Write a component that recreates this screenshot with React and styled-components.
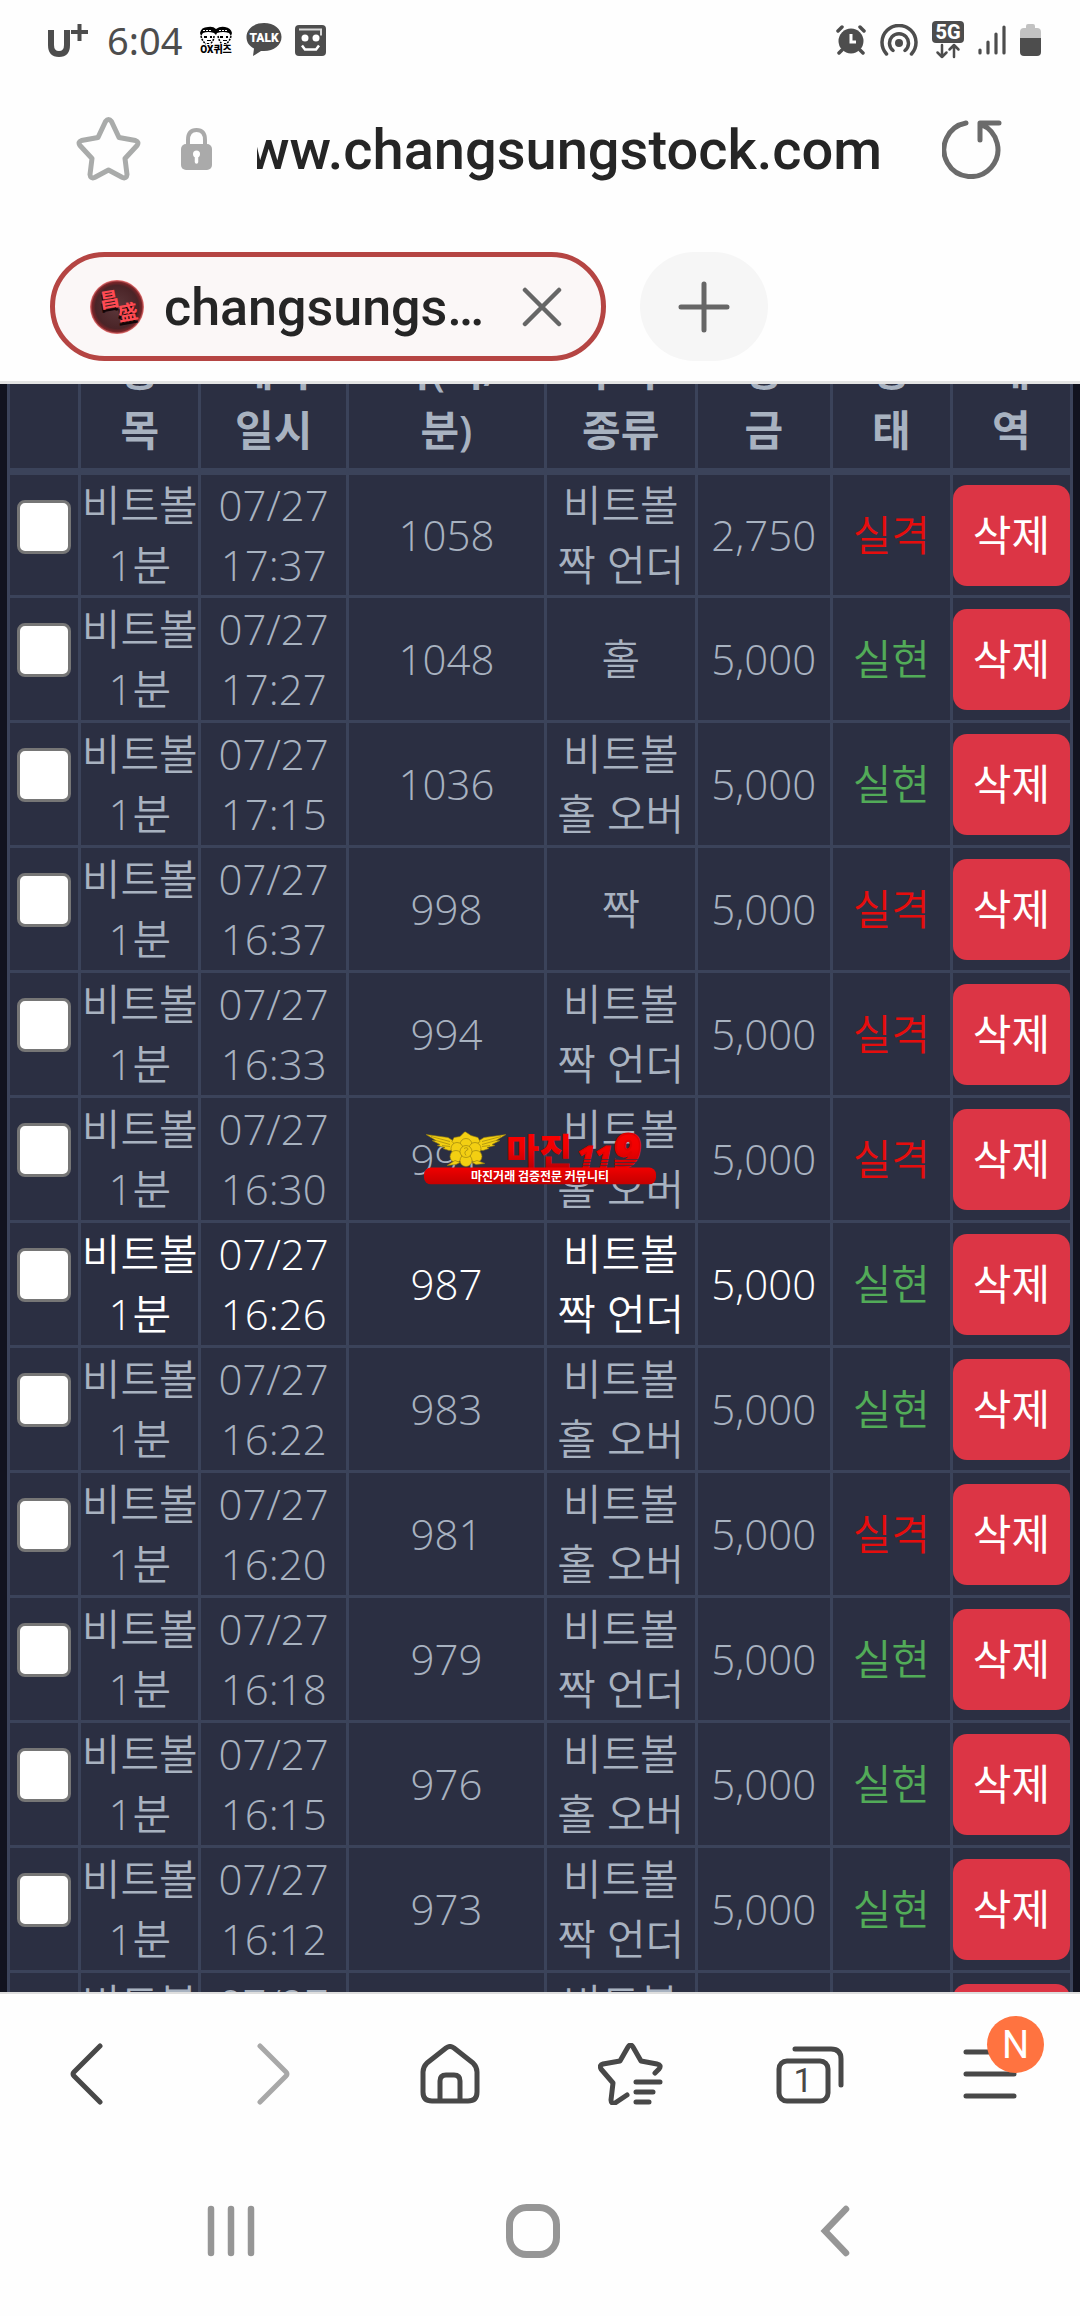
import React from 'react';
import styled, { createGlobalStyle } from 'styled-components';

const ui = `Roboto, "Noto Sans CJK KR", sans-serif`;
const body = `"Open Sans", "Noto Sans CJK KR", sans-serif`;

const GlobalStyle = createGlobalStyle`
  * { box-sizing: border-box; }
  body { margin: 0; background: #fefefe; font-family: ${ui}; }
  button { margin: 0; padding: 0; border: 0; background: none; font: inherit; color: inherit; display: flex; align-items: center; justify-content: center; }
  svg { display: block; }
`;

const Phone = styled.div`
  position: relative;
  display: flex;
  flex-direction: column;
  height: 100vh;
  overflow: hidden;
`;

const StatusBar = styled.header`
  display: flex;
  justify-content: space-between;
  align-items: center;
  height: 80px;
  padding: 0 39px 0 48px;
  color: #4d4d4d;
`;

const StatusGroup = styled.div`
  display: flex;
  align-items: center;
  gap: ${(p) => p.$gap}px;
`;

const Clock = styled.time`
  margin: 0 4px 0 6px;
  font-family: "Noto Sans", sans-serif;
  font-size: 38px;
  line-height: 48px;
`;

const AddressBar = styled.div`
  display: flex;
  align-items: center;
  height: 140px;
  padding: 0 78px 2px 76px;
`;

const LockSlot = styled.span`
  margin-left: 40px;
`;

const Url = styled.div`
  flex: 1;
  display: flex;
  justify-content: flex-end;
  overflow: hidden;
  margin: 0 60px 0 45px;
  padding-top: 2px;
  font-size: 56px;
  font-weight: 500;
  line-height: 72px;
  color: #252525;
  white-space: nowrap;
`;

const TabStrip = styled.div`
  display: flex;
  gap: 34px;
  height: 164px;
  padding: 32px 50px 20px;
  border-bottom: 3px solid #e3e3e3;
`;

const Tab = styled.div`
  display: flex;
  align-items: center;
  width: 556px;
  height: 109px;
  padding: 0 39px 0 35px;
  border: 5px solid #b54543;
  border-radius: 55px;
  background: #fbf7f7;
`;

const TabTitle = styled.span`
  flex: 1;
  margin-left: 20px;
  padding-top: 2px;
  font-size: 52px;
  font-weight: 500;
  line-height: 64px;
  color: #252525;
`;

const NewTab = styled.button`
  && { width: 128px; height: 109px; border-radius: 55px; background: #f6f6f6; }
`;

const Content = styled.main`
  flex: 1;
  min-height: 0;
  display: flex;
  align-items: flex-start;
  overflow: hidden;
  padding: 0 7px;
  background: #11131f;
`;

const Table = styled.table`
  width: 100%;
  margin-top: -47px;
  table-layout: fixed;
  border-collapse: collapse;
  background: #2b2f42;
  color: #a8b2c0;
  font-family: ${body};
  font-size: 42px;
  font-weight: 350;
  line-height: 60px;
  text-align: center;
  white-space: pre-line;
`;

const Col = styled.col`
  width: ${(p) => p.$w}%;
`;

const HeadCell = styled.th`
  padding: 0 0 8px;
  border: 3px solid #3b435a;
  border-bottom-width: 7px;
  font-weight: 600;
  vertical-align: bottom;
`;

const Row = styled.tr`
  color: ${(p) => (p.$active ? '#ffffff' : 'inherit')};
`;

const Cell = styled.td`
  height: 125px;
  padding: 0;
  border: 3px solid #3b435a;
  vertical-align: middle;
`;

const CheckCell = styled(Cell)`
  vertical-align: top;
  padding-top: 25px;
`;

const Check = styled.input`
  display: block;
  appearance: none;
  width: 54px;
  height: 54px;
  margin: 0 auto;
  border: 3px solid #767676;
  border-radius: 8px;
  background: #ffffff;
`;

const StatusCell = styled(Cell)`
  color: ${(p) => (p.$won ? '#52ab58' : '#e60d0d')};
`;

const DeleteButton = styled.button`
  && {
    width: 100%;
    height: 101px;
    border-radius: 14px;
    background: #dc3545;
    color: #ffffff;
    font-weight: 400;
  }
`;

const Watermark = styled.div`
  position: absolute;
  left: 50%;
  top: 50%;
  transform: translate(-50%, -50%);
`;

const Toolbar = styled.nav`
  display: grid;
  grid-template-columns: repeat(6, 1fr);
  align-items: center;
  height: 162px;
  border-top: 2px solid #dedede;
`;

const ToolButton = styled.button`
  && { position: relative; height: 100px; color: ${(p) => (p.$dim ? '#a8a8a8' : '#484848')}; }
`;

const Badge = styled.span`
  position: absolute;
  top: -8px;
  left: 87px;
  width: 57px;
  height: 57px;
  border-radius: 50%;
  background: #ff7340;
  color: #ffffff;
  font-size: 38px;
  line-height: 58px;
  text-align: center;
`;

const SystemNav = styled.nav`
  display: grid;
  grid-template-columns: repeat(3, 302px);
  justify-content: center;
  align-items: center;
  height: 162px;
  padding: 0 14px 8px 0;
  color: #969696;
`;

const stroke = (w) => ({
  fill: 'none',
  stroke: 'currentColor',
  strokeWidth: w,
  strokeLinecap: 'round',
  strokeLinejoin: 'round',
});

const Carrier = () => (
  <svg width="40" height="34" viewBox="0 0 40 34" role="img" aria-label="U+">
    <path d="M3 7v15q0 9 8 9t8-9V7" fill="none" stroke="currentColor" strokeWidth="6" />
    <path d="M23 9h17M31.500 1v17" stroke="currentColor" strokeWidth="4" />
  </svg>
);

const QuizIcon = () => (
  <svg width="34" height="28" viewBox="0 0 34 28" fill="#000">
    <path d="M1 7Q2 1 9 1q5-1 8 2 4-3 9-2 6 1 7 6l-1 3-2-3q-6-2-12 0l-1 2-2-2Q9 5 4 7l-2 3z" />
    <path d="M4 4.500h9M20 4.500h9" stroke="#fff" strokeWidth="1" strokeDasharray="2 1" />
    <path d="M2 10q1 5 5 8M15 10q0 5-4 8M19 10q1 5 4 8M32 10q-1 5-5 8" fill="none" stroke="#000" strokeWidth="1.500" strokeDasharray="2 1" />
    <path d="M5 10h3v2H5zM11 10h2v2h-2zM8 14h4v1H8zM21 10h3v2h-3zM27 10h2v2h-2zM24 14h4v1h-4zM8 17h2v1H8zM25 17h2v1h-2z" />
    <text x="17" y="27" textAnchor="middle" fontSize="10" fontWeight="900" fontFamily='Roboto, "Noto Sans CJK KR", sans-serif'>OX퀴즈</text>
  </svg>
);

const TalkIcon = () => (
  <svg width="36" height="34" viewBox="0 0 36 34">
    <path d="M18 0c10 0 17.500 6 17.500 14S28 28 18 28h-3l-8 5 1-7.500C3 23 .5 19 .5 14 .5 6 8 0 18 0z" fill="currentColor" />
    <text x="18" y="19" textAnchor="middle" fontSize="12" fontWeight="900" fontFamily="Roboto, sans-serif" fill="#fff">TALK</text>
  </svg>
);

const FaceIcon = () => (
  <svg width="31" height="31" viewBox="0 0 31 31">
    <rect width="31" height="31" rx="4" fill="currentColor" />
    <path d="M4 4.500h22v6" fill="none" stroke="#d8d8d8" strokeWidth="2" />
    <circle cx="10" cy="13" r="3.500" fill="#fff" />
    <circle cx="21" cy="13" r="3.500" fill="#fff" />
    <path d="M7 20.500l3 4h11l3-4" fill="none" stroke="#fff" strokeWidth="2.500" />
  </svg>
);

const AlarmIcon = () => (
  <svg width="30" height="30" viewBox="0 0 30 30">
    <circle cx="15" cy="16" r="12.500" fill="currentColor" />
    <path d="M2 6l4-4M28 6l-4-4M6 25l-3 3M24 25l3 3" {...stroke(3.5)} />
    <path d="M15 9v8h5" fill="none" stroke="#fff" strokeWidth="3" />
  </svg>
);

const HotspotIcon = () => (
  <svg width="38" height="32" viewBox="0 0 38 32">
    <circle cx="19" cy="19" r="4" fill="currentColor" />
    <path d="M13 26.500a9.500 9.500 0 1 1 12 0M6.500 30a17 17 0 1 1 25 0" {...stroke(3.5)} />
  </svg>
);

const NetworkIcon = () => (
  <svg width="32" height="38" viewBox="0 0 32 38">
    <rect width="32" height="22" rx="4" fill="currentColor" />
    <text x="16" y="18" textAnchor="middle" fontSize="20" fontWeight="800" fontFamily="Roboto, sans-serif" fill="#fff">5G</text>
    <path d="M10 24v12M5.500 31.500l4.500 4.500 4.500-4.500M22 36V24M17.500 28.500L22 24l4.500 4.500" {...stroke(2.5)} />
  </svg>
);

const SignalIcon = () => (
  <svg width="28" height="30" viewBox="0 0 28 30">
    <path d="M2 25v3M10 17v11M18 9v19M26 2v26" {...stroke(3.2)} />
  </svg>
);

const BatteryIcon = () => (
  <svg width="21" height="32" viewBox="0 0 21 32">
    <path d="M6 4V2q0-2 2-2h5q2 0 2 2v2h2q4 0 4 4v6H0V8q0-4 4-4z" fill="#c2c2c2" />
    <path d="M0 14h21v14q0 4-4 4H4q-4 0-4-4z" fill="currentColor" />
  </svg>
);

const StarIcon = () => (
  <svg width="65" height="64" viewBox="0 0 65 64" color="#a9abaa">
    <path d="M29.500 4.500q3-4 6 0L43 20.500l16.500 3q4 1.500 1.500 5L49 41.500l2 16q-.5 4.500-4.500 3L32.500 53 18.500 60.500q-4 1.500-4.500-3l2-16L4 28.500q-2.500-3.500 1.500-5l16.500-3z" {...stroke(5)} />
  </svg>
);

const LockIcon = () => (
  <svg width="31" height="42" viewBox="0 0 31 42">
    <path d="M7 19v-7q0-10 8.500-10T24 12v7" fill="none" stroke="#aaa" strokeWidth="4" />
    <rect y="16" width="31" height="26" rx="5" fill="#aaa" />
    <path d="M15.500 27v7" stroke="#fff" strokeWidth="3.500" strokeLinecap="round" />
    <circle cx="15.500" cy="26" r="3.500" fill="#fff" />
  </svg>
);

const ReloadIcon = () => (
  <svg width="60" height="60" viewBox="0 0 60 60" color="#6b6b6b">
    <path d="M24 4A27 27 0 1 0 39 5.500M38 21V4h19" {...stroke(5)} />
  </svg>
);

const Favicon = () => (
  <svg width="54" height="54" viewBox="0 0 54 54">
    <defs>
      <radialGradient id="fav">
        <stop offset="0" stopColor="#5c383b" />
        <stop offset="0.800" stopColor="#4a2427" />
        <stop offset="0.920" stopColor="#7a2428" />
        <stop offset="1" stopColor="#f07a7a" />
      </radialGradient>
    </defs>
    <circle cx="27" cy="27" r="27" fill="url(#fav)" />
    <g fontFamily='"Noto Sans CJK SC", sans-serif' fontWeight="700">
      <g fill="#140506">
        <text x="8" y="30" fontSize="20" transform="rotate(-10 18 18)">昌</text>
        <text x="27" y="43" fontSize="20" transform="rotate(-10 36 34)">盛</text>
      </g>
      <g fill="#ff4a52">
        <text x="9" y="27" fontSize="20" transform="rotate(-10 18 18)">昌</text>
        <text x="28" y="40" fontSize="20" transform="rotate(-10 36 34)">盛</text>
      </g>
    </g>
  </svg>
);

const CloseIcon = () => (
  <svg width="40" height="40" viewBox="0 0 40 40" color="#666"><path d="M3 3l34 34M37 3L3 37" {...stroke(4.5)} /></svg>
);

const PlusIcon = () => (
  <svg width="52" height="52" viewBox="0 0 52 52" color="#666"><path d="M26 3v46M3 26h46" {...stroke(5)} /></svg>
);

const Chevron = ({ flip }) => (
  <svg width="40" height="62" viewBox="0 0 40 62">
    <path d={flip ? 'M10 3l26 26q2 2 0 4L10 59' : 'M30 3L4 29q-2 2 0 4l26 26'} {...stroke(5)} />
  </svg>
);

const HomeIcon = () => (
  <svg width="60" height="60" viewBox="0 0 60 60">
    <path d="M26 4q4-3 8 0l19 15q4 4 4 9v20q0 9-9 9H12q-9 0-9-9V28q0-5 4-9zM20 57V37q0-6 6-6h8q6 0 6 6v20" {...stroke(5)} />
  </svg>
);

const BookmarksIcon = () => (
  <svg width="65" height="62" viewBox="0 0 65 62">
    <path d="M57 30l4-4q3-4-2-5l-16-3L35 4q-2.500-4-5 0l-8 14-17 3q-4 1-2 5l12 14-2 17q0 4 4 3l12-8M38 39h24M38 49h17M38 59h13" {...stroke(5)} />
  </svg>
);

const TabsIcon = () => (
  <svg width="68" height="59" viewBox="0 0 68 59">
    <path d="M19 4h36q10 0 10 10v26" {...stroke(5)} />
    <rect x="3" y="16" width="49" height="40" rx="8" {...stroke(5)} />
    <text x="27" y="47" textAnchor="middle" fontSize="34" fontFamily="Roboto, sans-serif" fill="currentColor">1</text>
  </svg>
);

const MenuIcon = () => (
  <svg width="54" height="50" viewBox="0 0 54 50"><path d="M3 3h48M3 25h48M3 47h48" {...stroke(5)} /></svg>
);

const MarginLogo = () => (
  <svg width="232" height="53" viewBox="0 0 232 53" role="img" aria-label="마진119">
    <defs>
      <linearGradient id="red" x1="0" y1="0" x2="0" y2="1">
        <stop offset="0" stopColor="#ff0000" />
        <stop offset="0.500" stopColor="#f00000" />
        <stop offset="1" stopColor="#a80008" />
      </linearGradient>
      <linearGradient id="bar" x1="0" y1="0" x2="0" y2="1">
        <stop offset="0" stopColor="#f00000" />
        <stop offset="1" stopColor="#c40000" />
      </linearGradient>
    </defs>
    <g fill="#f3cf12" stroke="#8d7710" strokeWidth="0.600">
      <path d="M2 3l22 3 8 5 2 7-9 1-6-2 2-1-8-2 3-1-8-4 4 0z" />
      <path d="M82 3L60 6l-8 5-2 7 9 1 6-2-2-1 8-2-3-1 8-4-4 0z" />
      <path d="M36 5l5-5 6 4 7 2 2 4-4 3-10 2-11-2-3-3 2-4z" />
      <circle cx="42" cy="13" r="6" />
      <circle cx="33" cy="17" r="6" />
      <circle cx="51" cy="17" r="6" />
      <circle cx="32" cy="25" r="6" />
      <circle cx="52" cy="25" r="6" />
      <circle cx="42" cy="29" r="6" />
      <circle cx="42" cy="20" r="6" />
      <path d="M31 29l-8 5 9-1 4-2zM53 29l8 3-9 1-4-2z" />
      <path d="M40 17q4-2 4 1-5 2-2 6M7 5l19 5M12 9l14 4M18 14l8 1M77 5l-19 5M72 9l-14 4M66 14l-8 1" fill="none" />
    </g>
    <g fill="url(#red)">
      <text x="82" y="33" fontSize="36" fontWeight="900" fontFamily='"Noto Sans CJK KR", sans-serif'>마진</text>
      <g fontFamily='"Open Sans", sans-serif' fontWeight="800" fontStyle="italic" stroke="#e00000">
        <text x="153" y="36" fontSize="30" strokeWidth="1">11</text>
        <text x="189" y="36" fontSize="48" strokeWidth="2">9</text>
      </g>
    </g>
    <path d="M152 28h62M152 31h62M152 34h62" stroke="#2b2f42" strokeWidth="0.700" />
    <rect y="36" width="232" height="17" rx="7" fill="url(#bar)" />
    <text x="116" y="49" textAnchor="middle" fontSize="12" fontWeight="700" fill="#fff" fontFamily='"Noto Sans CJK KR", sans-serif'>마진거래 검증전문 커뮤니티</text>
  </svg>
);

const columns = [
  { w: 6.7, label: '' },
  { w: 11.3, label: '종\n목' },
  { w: 13.9, label: '예약\n일시' },
  { w: 18.6, label: '차(시/\n분)' },
  { w: 14.2, label: '투자\n종류' },
  { w: 12.7, label: '상\n금' },
  { w: 11.3, label: '상\n태' },
  { w: 11.3, label: '내\n역' },
];

const UNDER = '비트볼\n짝 언더';
const OVER = '비트볼\n홀 오버';

const rows = [
  ['17:37', '1058', UNDER, '2,750', false],
  ['17:27', '1048', '홀', '5,000', true],
  ['17:15', '1036', OVER, '5,000', true],
  ['16:37', '998', '짝', '5,000', false],
  ['16:33', '994', UNDER, '5,000', false],
  ['16:30', '991', OVER, '5,000', false],
  ['16:26', '987', UNDER, '5,000', true],
  ['16:22', '983', OVER, '5,000', true],
  ['16:20', '981', OVER, '5,000', false],
  ['16:18', '979', UNDER, '5,000', true],
  ['16:15', '976', OVER, '5,000', true],
  ['16:12', '973', UNDER, '5,000', true],
  ['16:10', '971', OVER, '5,000', true],
];

export default function App() {
  return (
    <Phone>
      <GlobalStyle />
      <StatusBar>
        <StatusGroup $gap={13}>
          <Carrier />
          <Clock>6:04</Clock>
          <QuizIcon />
          <TalkIcon />
          <FaceIcon />
        </StatusGroup>
        <StatusGroup $gap={14}>
          <AlarmIcon />
          <HotspotIcon />
          <NetworkIcon />
          <SignalIcon />
          <BatteryIcon />
        </StatusGroup>
      </StatusBar>

      <AddressBar>
        <button aria-label="북마크 추가"><StarIcon /></button>
        <LockSlot><LockIcon /></LockSlot>
        <Url><span>www.changsungstock.com</span></Url>
        <button aria-label="새로고침"><ReloadIcon /></button>
      </AddressBar>

      <TabStrip>
        <Tab>
          <Favicon />
          <TabTitle>changsungs…</TabTitle>
          <button aria-label="탭 닫기"><CloseIcon /></button>
        </Tab>
        <NewTab aria-label="새 탭"><PlusIcon /></NewTab>
      </TabStrip>

      <Content>
        <Table>
          <colgroup>
            {columns.map((c, i) => <Col key={i} $w={c.w} />)}
          </colgroup>
          <thead>
            <tr>{columns.map((c, i) => <HeadCell key={i} scope="col">{c.label}</HeadCell>)}</tr>
          </thead>
          <tbody>
            {rows.map(([time, round, kind, amount, won]) => (
              <Row key={round} $active={round === '987'}>
                <CheckCell><Check type="checkbox" aria-label={`${round} 선택`} /></CheckCell>
                <Cell>{'비트볼\n1분'}</Cell>
                <Cell>{`07/27\n${time}`}</Cell>
                <Cell>{round}</Cell>
                <Cell>{kind}</Cell>
                <Cell>{amount}</Cell>
                <StatusCell $won={won}>{won ? '실현' : '실격'}</StatusCell>
                <Cell><DeleteButton>삭제</DeleteButton></Cell>
              </Row>
            ))}
          </tbody>
        </Table>
      </Content>

      <Toolbar>
        <ToolButton aria-label="뒤로"><Chevron /></ToolButton>
        <ToolButton aria-label="앞으로" $dim><Chevron flip /></ToolButton>
        <ToolButton aria-label="홈"><HomeIcon /></ToolButton>
        <ToolButton aria-label="북마크"><BookmarksIcon /></ToolButton>
        <ToolButton aria-label="탭"><TabsIcon /></ToolButton>
        <ToolButton aria-label="메뉴"><MenuIcon /><Badge>N</Badge></ToolButton>
      </Toolbar>

      <SystemNav>
        <button aria-label="최근 앱">
          <svg width="48" height="52" viewBox="0 0 48 52"><path d="M4 4v44M24 4v44M44 4v44" {...stroke(6.5)} /></svg>
        </button>
        <button aria-label="홈 화면">
          <svg width="54" height="54" viewBox="0 0 54 54"><rect x="3.500" y="3.500" width="47" height="47" rx="17" {...stroke(7)} /></svg>
        </button>
        <button aria-label="이전">
          <svg width="30" height="52" viewBox="0 0 30 52"><path d="M26 4L5 26l21 22" {...stroke(6.5)} strokeLinejoin="miter" /></svg>
        </button>
      </SystemNav>

      <Watermark><MarginLogo /></Watermark>
    </Phone>
  );
}
